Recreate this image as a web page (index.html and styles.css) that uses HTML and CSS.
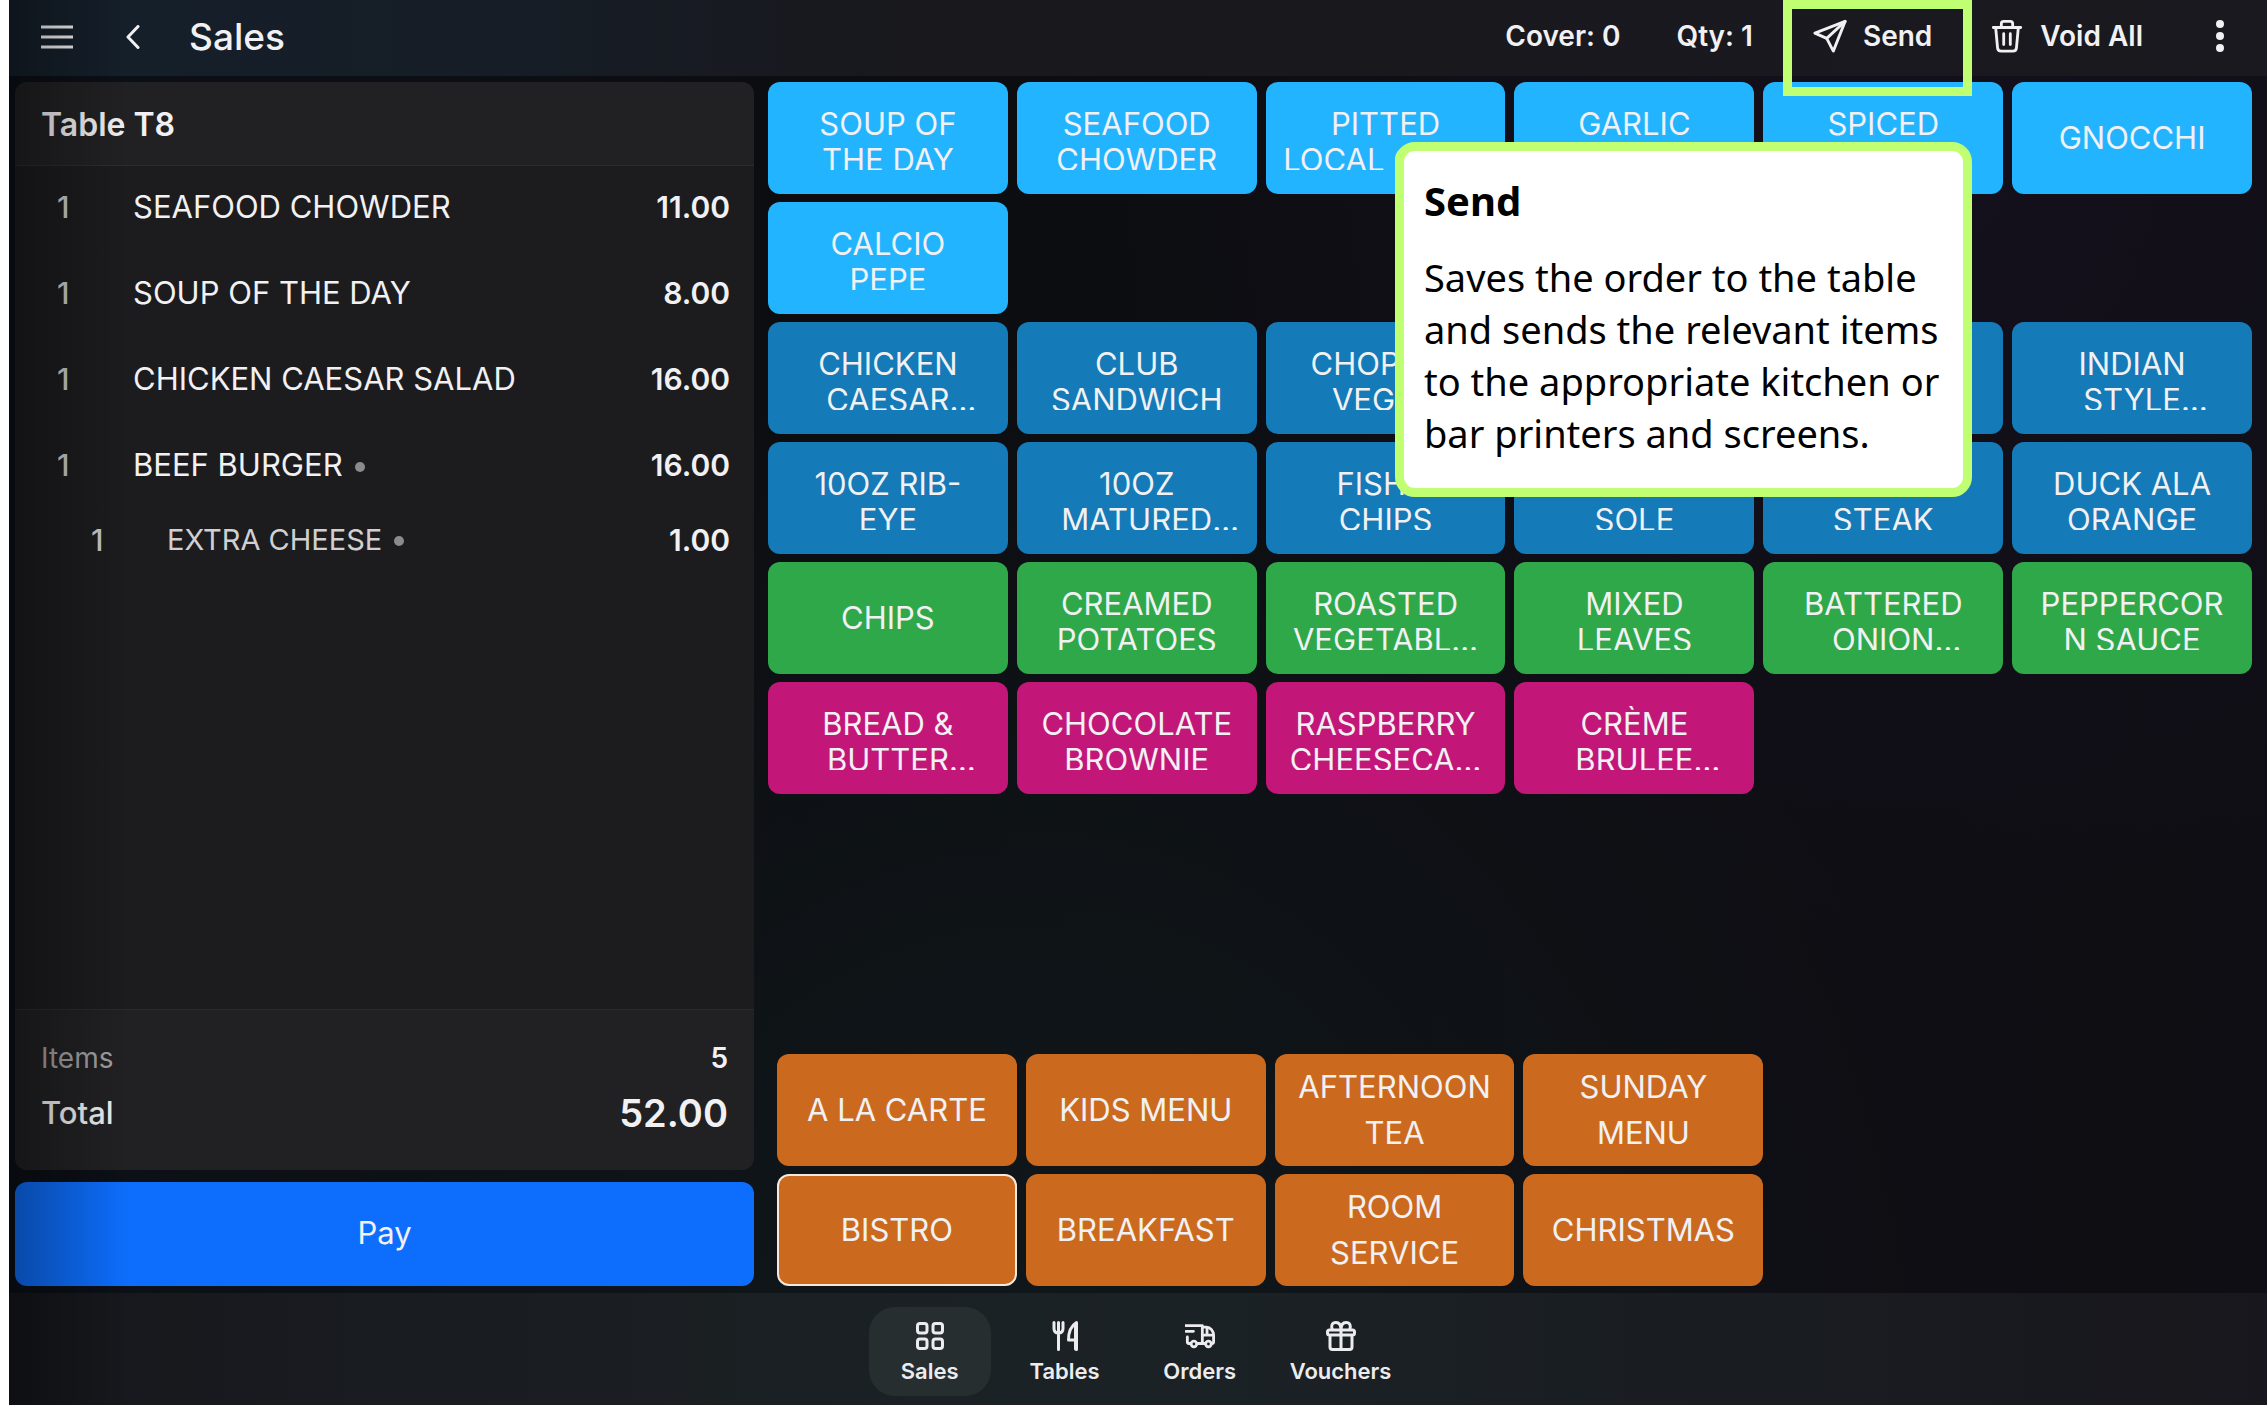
FILE: index.html
```html
<!DOCTYPE html>
<html lang="en">
<head>
<meta charset="utf-8">
<meta name="viewport" content="width=device-width, initial-scale=1">
<title>Sales</title>
<link rel="stylesheet" href="styles.css">
</head>
<body>
<div class="app">
  <header class="topbar">
    <button class="icon-btn" type="button" aria-label="Menu">
      <svg class="icon-menu" viewBox="0 0 32 26"><path d="M0 3h32M0 13h32M0 23h32"/></svg>
    </button>
    <button class="icon-btn back" type="button" aria-label="Back">
      <svg class="icon-back" viewBox="0 0 16 24"><path d="M13 1.500 3 12l10 10.500"/></svg>
    </button>
    <h1 class="title">Sales</h1>
    <div class="actions">
      <span class="stat">Cover: 0</span>
      <span class="stat">Qty: 1</span>
      <button class="action send" type="button">
        <svg class="icon" viewBox="0 0 36 36"><path d="M34 2.500 2 15l12.500 5.500L21.500 34z"/><path d="M34 2.500l-19.500 18"/></svg>
        Send
      </button>
      <button class="action" type="button">
        <svg class="icon" viewBox="0 0 36 36"><path d="M3.500 9h29M6 9l2 21.500c.2 2.300 1.500 3.500 3.800 3.500h12.400c2.300 0 3.600-1.200 3.800-3.500L30 9M12 9V5c0-1.700.8-2.500 2.500-2.500h7c1.700 0 2.500.8 2.500 2.500v4M14.500 15.500V27M21.500 15.500V27"/></svg>
        Void All
      </button>
      <button class="icon-btn more-btn" type="button" aria-label="More">
        <svg class="icon-more" viewBox="0 0 10 34"><circle cx="5" cy="5" r="4"/><circle cx="5" cy="17" r="4"/><circle cx="5" cy="29" r="4"/></svg>
      </button>
    </div>
  </header>

  <main class="main">
    <section class="order">
      <div class="ticket">
        <h2 class="ticket-head">Table T8</h2>
        <div class="ticket-body">
          <table class="lines">
            <tbody>
              <tr><td class="qty">1</td><td class="name">SEAFOOD CHOWDER</td><td class="price">11.00</td></tr>
              <tr><td class="qty">1</td><td class="name">SOUP OF THE DAY</td><td class="price">8.00</td></tr>
              <tr><td class="qty">1</td><td class="name">CHICKEN CAESAR SALAD</td><td class="price">16.00</td></tr>
              <tr><td class="qty">1</td><td class="name unsent">BEEF BURGER</td><td class="price">16.00</td></tr>
              <tr class="modifier"><td class="qty">1</td><td class="name unsent">EXTRA CHEESE</td><td class="price">1.00</td></tr>
            </tbody>
          </table>
        </div>
        <div class="totals">
          <div class="sum"><span class="sum-label">Items</span><span class="sum-value">5</span></div>
          <div class="sum grand"><span class="sum-label">Total</span><span class="sum-value">52.00</span></div>
        </div>
      </div>
      <button class="pay" type="button">Pay</button>
    </section>

    <section class="menu">
      <div class="grid">
        <button class="tile starter" type="button"><span class="label">SOUP OF<br>THE DAY</span></button>
        <button class="tile starter" type="button"><span class="label">SEAFOOD<br>CHOWDER</span></button>
        <button class="tile starter" type="button"><span class="label">PITTED<br>LOCAL OLIV…</span></button>
        <button class="tile starter" type="button"><span class="label">GARLIC<br>&nbsp;</span></button>
        <button class="tile starter" type="button"><span class="label">SPICED<br>&nbsp;</span></button>
        <button class="tile starter" type="button"><span class="label">GNOCCHI</span></button>

        <button class="tile starter" type="button"><span class="label">CALCIO<br>PEPE</span></button>

        <button class="tile main-course row-start" type="button"><span class="label">CHICKEN<br>CAESAR<span class="cut">…</span></span></button>
        <button class="tile main-course" type="button"><span class="label">CLUB<br>SANDWICH</span></button>
        <button class="tile main-course" type="button"><span class="label">CHOPPED<br>VEGAN</span></button>
        <button class="tile main-course" type="button" aria-label="Main course"></button>
        <button class="tile main-course" type="button" aria-label="Main course"></button>
        <button class="tile main-course" type="button"><span class="label">INDIAN<br>STYLE<span class="cut">…</span></span></button>

        <button class="tile main-course" type="button"><span class="label">10OZ RIB-<br>EYE</span></button>
        <button class="tile main-course" type="button"><span class="label">10OZ<br>MATURED<span class="cut">…</span></span></button>
        <button class="tile main-course" type="button"><span class="label">FISH &amp;<br>CHIPS</span></button>
        <button class="tile main-course" type="button"><span class="label">&nbsp;<br>SOLE</span></button>
        <button class="tile main-course" type="button"><span class="label">&nbsp;<br>STEAK</span></button>
        <button class="tile main-course" type="button"><span class="label">DUCK ALA<br>ORANGE</span></button>

        <button class="tile side" type="button"><span class="label">CHIPS</span></button>
        <button class="tile side" type="button"><span class="label">CREAMED<br>POTATOES</span></button>
        <button class="tile side" type="button"><span class="label">ROASTED<br>VEGETABL…</span></button>
        <button class="tile side" type="button"><span class="label">MIXED<br>LEAVES</span></button>
        <button class="tile side" type="button"><span class="label">BATTERED<br>ONION<span class="cut">…</span></span></button>
        <button class="tile side" type="button"><span class="label">PEPPERCOR<br>N SAUCE</span></button>

        <button class="tile dessert" type="button"><span class="label">BREAD &amp;<br>BUTTER<span class="cut">…</span></span></button>
        <button class="tile dessert" type="button"><span class="label">CHOCOLATE<br>BROWNIE</span></button>
        <button class="tile dessert" type="button"><span class="label">RASPBERRY<br>CHEESECA…</span></button>
        <button class="tile dessert" type="button"><span class="label">CRÈME<br>BRULEE<span class="cut">…</span></span></button>
      </div>

      <div class="grid categories">
        <button class="tile category" type="button">A LA CARTE</button>
        <button class="tile category" type="button">KIDS MENU</button>
        <button class="tile category" type="button">AFTERNOON<br>TEA</button>
        <button class="tile category" type="button">SUNDAY<br>MENU</button>
        <button class="tile category row-start selected" type="button">BISTRO</button>
        <button class="tile category" type="button">BREAKFAST</button>
        <button class="tile category" type="button">ROOM<br>SERVICE</button>
        <button class="tile category" type="button">CHRISTMAS</button>
      </div>
    </section>
  </main>

  <nav class="tabs">
    <a class="tab active" href="#sales">
      <svg class="tab-icon" viewBox="0 0 30 30"><rect x="2.500" y="2.500" width="9.500" height="9.500" rx="2.500"/><rect x="18" y="2.500" width="9.500" height="9.500" rx="2.500"/><rect x="2.500" y="18" width="9.500" height="9.500" rx="2.500"/><rect x="18" y="18" width="9.500" height="9.500" rx="2.500"/></svg>
      Sales
    </a>
    <a class="tab" href="#tables">
      <svg class="tab-icon" viewBox="0 0 30 30"><path d="M4 1.500v6c0 3 1.500 4.500 4.500 4.500S13 10.500 13 7.500v-6M8.500 1.500v27"/><path d="M26.500 28.500v-27c-5 3-8 9-8 17.500h8"/><path d="M25.500 3v25"/></svg>
      Tables
    </a>
    <a class="tab" href="#orders">
      <svg class="tab-icon" viewBox="0 0 32 30"><path d="M0 4h18.500v19H13M1 10h8M2.500 16v5.500c0 1 .5 1.500 1.500 1.500h2M18.500 5.500H23c4 0 7.500 4.500 7.500 8.500v7c0 1.300-.7 2-2 2M18.500 14h12M23.500 6v8M18 23h4"/><circle cx="9.500" cy="23.500" r="3"/><circle cx="25" cy="23.500" r="3"/></svg>
      Orders
    </a>
    <a class="tab" href="#vouchers">
      <svg class="tab-icon" viewBox="0 0 30 30"><path d="M3.500 9h23c1.300 0 2 .7 2 2v1c0 1.300-.7 2-2 2h-23c-1.300 0-2-.7-2-2v-1c0-1.300.7-2 2-2zM4 14v12c0 1.700.8 2.500 2.500 2.500h17c1.700 0 2.500-.8 2.500-2.500V14M15 9v19.500M15 9C15 4 13 1.500 10 1.500 6 1.500 4.500 5 6.500 9M15 9c0-5 2-7.500 5-7.500 4 0 5.500 3.500 3.500 7.500"/></svg>
      Vouchers
    </a>
  </nav>

  <div class="spotlight"></div>
  <aside class="callout">
    <h3 class="callout-title">Send</h3>
    <p class="callout-text">Saves the order to the table and sends the relevant items to the appropriate kitchen or bar printers and screens.</p>
  </aside>
</div>
</body>
</html>
```
FILE: styles.css
```css
* {
  box-sizing: border-box;
}

body {
  margin: 0;
  background: #fff;
  font-family: Inter, "Liberation Sans", sans-serif;
  color: #f1f1f3;
}

h1, h2, h3, p {
  margin: 0;
}

button {
  margin: 0;
  padding: 0;
  border: 0;
  background: none;
  color: inherit;
  font: inherit;
  cursor: pointer;
}

svg {
  display: block;
  fill: none;
  stroke: currentColor;
  stroke-width: 3;
  stroke-linecap: round;
  stroke-linejoin: round;
}

.app {
  position: relative;
  display: grid;
  grid-template-rows: 76px 1fr 112px;
  min-height: calc(100vh - 11px);
  margin: 0 1px 11px 9px;
  background:
    radial-gradient(circle at 85% 12%, #14101c, transparent 35%),
    radial-gradient(ellipse at 45% 100%, #10181b, transparent 55%),
    linear-gradient(to right, #0b1017, #0c0d11 35%, #0f0e14 100%);
}

/* soft shade along the left edge of the screen */
.app::after {
  content: "";
  position: absolute;
  inset: 0 auto 0 0;
  width: 120px;
  background: linear-gradient(to right, rgba(0, 0, 0, .35), transparent);
  pointer-events: none;
}

/* top bar */

.topbar {
  display: flex;
  align-items: center;
  padding: 0 42px 3px 32px;
  background: linear-gradient(to right, #15202b, #161d26 22%, #18181d 40%, #1a191f);
}

.icon-menu {
  width: 32px;
  height: 26px;
  stroke-linecap: butt;
}

.back {
  margin: 0 48px 0 52px;
}

.icon-back {
  width: 16px;
  height: 24px;
}

.title {
  font-size: 37px;
  line-height: 44px;
  font-weight: 500;
}

.actions {
  display: flex;
  align-items: center;
  margin-left: auto;
  padding-bottom: 2px;
  font-size: 28px;
  line-height: 36px;
  font-weight: 600;
}

.stat {
  margin-right: 56px;
}

.action {
  display: flex;
  align-items: center;
  gap: 16px;
  margin-right: 58px;
}

.send {
  margin-left: 4px;
}

.icon {
  width: 34px;
  height: 34px;
}

.more-btn {
  margin-left: 14px;
}

.icon-more {
  width: 10px;
  height: 34px;
  fill: currentColor;
  stroke: none;
}

/* layout */

.main {
  display: grid;
  grid-template-columns: 739fr 1484fr;
  gap: 14px;
  padding: 6px 15px 7px 6px;
}

.order {
  display: flex;
  flex-direction: column;
  gap: 12px;
}

.ticket {
  flex: 1;
  display: flex;
  flex-direction: column;
  border-radius: 12px;
  background: #1c1c1e;
  overflow: hidden;
}

.ticket-head {
  padding: 23px 26px 20px;
  border-bottom: 1px solid #2c2c2e;
  background: #212123;
  font-size: 32px;
  line-height: 40px;
  font-weight: 600;
}

.ticket-body {
  flex: 1;
}

.lines {
  width: 100%;
  border-collapse: collapse;
  line-height: 40px;
}

.lines td {
  padding: 21px 0 25px;
}

.lines .modifier td {
  padding-top: 10px;
}

.lines .qty {
  width: 118px;
  padding-left: 42px;
  font-size: 30px;
  font-weight: 500;
  color: #c8c8ca;
}

.lines .name {
  font-size: 31px;
}

.lines .price {
  padding-right: 24px;
  font-size: 30px;
  font-weight: 600;
  text-align: right;
}

.lines .modifier .qty {
  padding-left: 76px;
}

.lines .modifier .name {
  padding-left: 34px;
  font-size: 29px;
  color: #d0d0d2;
}

.unsent::after {
  content: "";
  display: inline-block;
  width: 10px;
  height: 10px;
  margin-left: 12px;
  border-radius: 50%;
  background: #8b8b8d;
  vertical-align: 4px;
}

.totals {
  display: grid;
  gap: 15px;
  padding: 28px 26px 37px;
  border-top: 1px solid #2a2a2c;
  background: #212123;
  line-height: 40px;
}

.sum {
  display: flex;
  justify-content: space-between;
  font-size: 28px;
}

.sum .sum-label {
  color: #a0a0a3;
}

.sum-value {
  font-weight: 600;
}

.grand .sum-label {
  font-size: 31px;
  font-weight: 500;
  color: #f1f1f3;
}

.grand .sum-value {
  font-size: 38px;
}

.pay {
  height: 104px;
  padding-bottom: 3px;
  border-radius: 12px;
  background: #0d6efd;
  font-size: 31px;
}

/* product grid */

.menu {
  display: flex;
  flex-direction: column;
  justify-content: space-between;
}

.grid {
  display: grid;
  grid-template-columns: repeat(6, minmax(0, 1fr));
  grid-auto-rows: 112px;
  gap: 8px 9px;
}

.categories {
  margin: 0 -9px 0 9px;
}

.tile {
  display: flex;
  align-items: center;
  justify-content: center;
  border-radius: 12px;
  font-size: 31px;
  line-height: 36px;
  text-align: center;
  white-space: nowrap;
}

.row-start {
  grid-column-start: 1;
}

/* two lines at most; the button face trims the foot of the second */
.label {
  width: 100%;
  max-height: 64px;
  overflow: hidden;
}

.cut {
  display: inline-block;
  width: 0;
}

.starter {
  background: #22b4ff;
}

.main-course {
  background: #147ab8;
}

.side {
  background: #2fa84a;
}

.dessert {
  background: #c21779;
}

.category {
  background: #cb6a1e;
  line-height: 46px;
}

.selected {
  border: 2px solid #f3e9e0;
}

/* bottom tabs */

.tabs {
  display: flex;
  justify-content: center;
  align-items: center;
  gap: 13px;
  padding-top: 5px;
  background: linear-gradient(to right, #16171c, #1a1e22 25%, #1b2225 50%, #191c21 80%, #18171d);
}

.tab {
  display: flex;
  flex-direction: column;
  align-items: center;
  gap: 7px;
  min-width: 122px;
  padding: 14px 16px 12px;
  border-radius: 26px;
  color: #ececee;
  font-size: 22px;
  line-height: 26px;
  font-weight: 600;
  text-decoration: none;
}

.active {
  background: #262e30;
}

.tab-icon {
  width: 30px;
  height: 30px;
}

/* guide overlay */

.spotlight {
  position: absolute;
  top: 0;
  right: 295px;
  width: 189px;
  height: 96px;
  border: 9px solid #c1ff72;
  pointer-events: none;
}

.callout {
  position: absolute;
  top: 142px;
  right: 295px;
  width: 577px;
  padding: 24px 12px 29px 20px;
  border: 9px solid #c1ff72;
  border-radius: 20px;
  background: #fff;
  color: #000;
  font-family: "Noto Sans", "Open Sans", sans-serif;
  font-size: 38px;
  line-height: 52px;
}

.callout-title {
  margin-bottom: 24px;
  font-size: 40px;
  font-weight: 700;
}
```
